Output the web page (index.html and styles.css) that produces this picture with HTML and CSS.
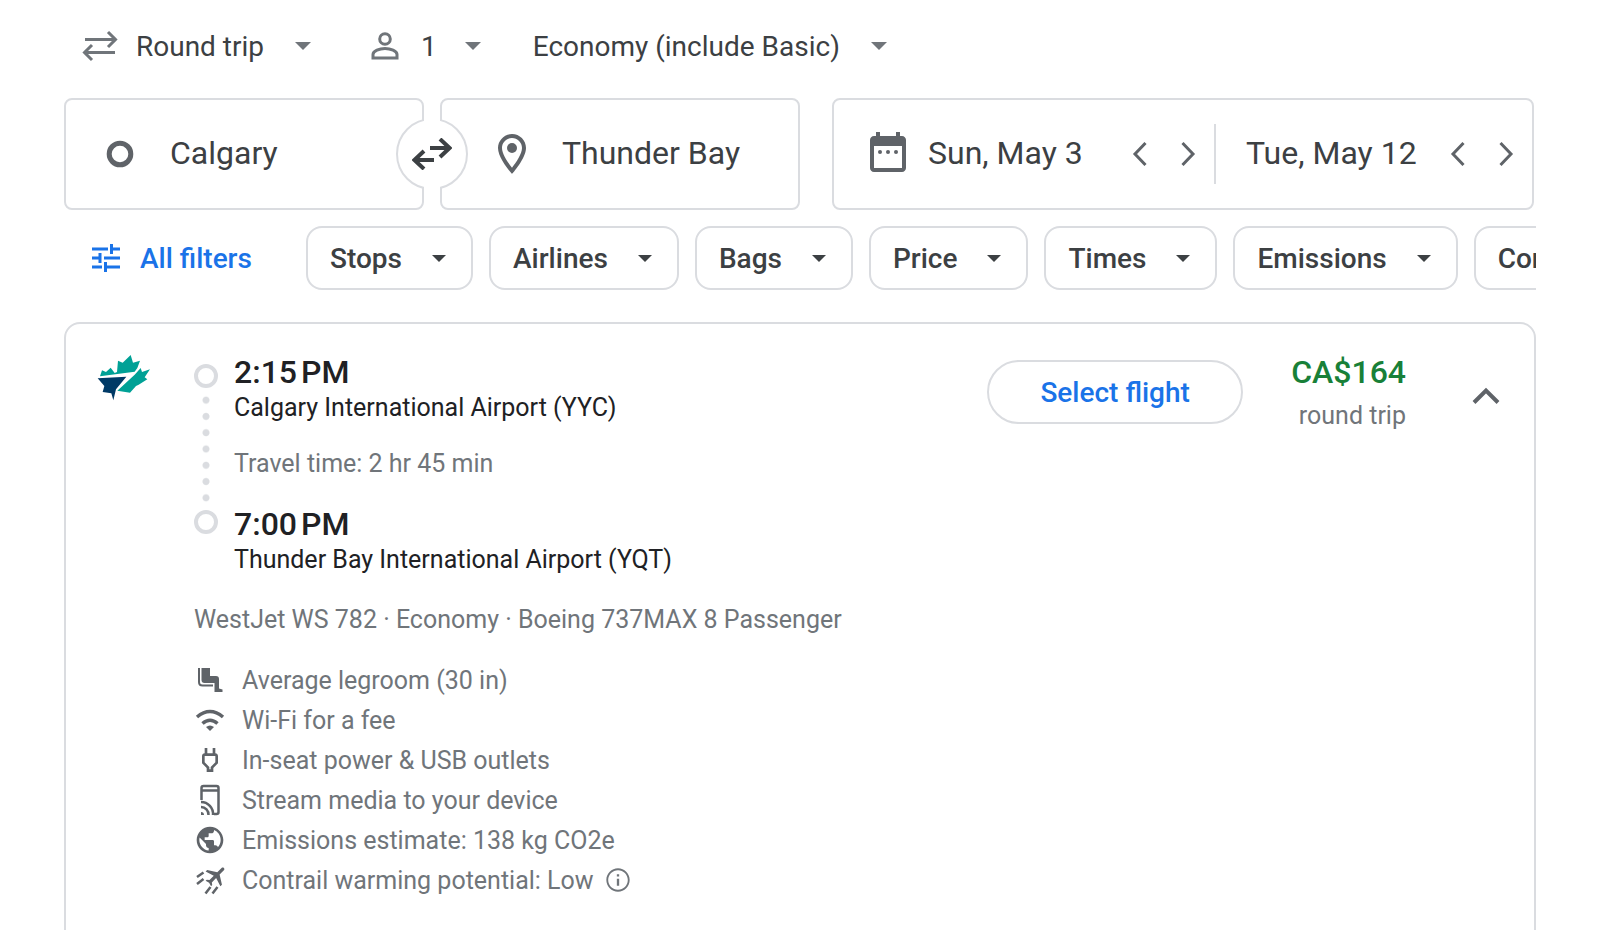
FILE: index.html
```
<!DOCTYPE html>
<html lang="en">
<head>
<meta charset="utf-8">
<title>Flights</title>
<link rel="stylesheet" href="styles.css">
</head>
<body>
<main class="page">
  <div class="options">
    <div class="option">
      <svg class="icon-trip" viewBox="0 0 36 36" fill="none" stroke="currentColor" stroke-width="3"><path d="M3 11.500H34M26 4l7.500 7.500L26 19M33 24.500H2M10 17l-7.500 7.500L10 32"/></svg>
      <div class="picker">
        <select class="picker-select" aria-label="Trip type"><option>Round trip</option><option>One way</option></select>
        <svg class="caret" viewBox="0 0 16 8"><path d="M0 0h16L8 8z" fill="currentColor"/></svg>
      </div>
    </div>
    <button class="option option-people" aria-label="1 passenger">
      <svg class="icon-person" viewBox="0 0 28 28" fill="none" stroke="currentColor" stroke-width="3"><circle cx="14" cy="7" r="5.300"/><path d="M2 26v-3.500C2 19 8.500 16.500 14 16.500S26 19 26 22.500V26z"/></svg>
      <span>1</span>
      <svg class="caret" viewBox="0 0 16 8"><path d="M0 0h16L8 8z" fill="currentColor"/></svg>
    </button>
    <div class="option">
      <div class="picker">
        <select class="picker-select" aria-label="Cabin class"><option>Economy (include Basic)</option><option>Business</option></select>
        <svg class="caret" viewBox="0 0 16 8"><path d="M0 0h16L8 8z" fill="currentColor"/></svg>
      </div>
    </div>
  </div>

  <div class="search">
    <div class="route">
      <label class="field">
        <span class="field-icon"><svg class="icon-origin" viewBox="0 0 28 28"><circle cx="14" cy="14" r="10.800" fill="none" stroke="currentColor" stroke-width="5"/></svg></span>
        <input class="field-input" type="text" value="Calgary" aria-label="Where from">
      </label>
      <label class="field">
        <span class="field-icon"><svg class="icon-large" viewBox="0 0 24 24" fill="currentColor"><path d="M12 2C8.130 2 5 5.130 5 9c0 5.250 7 13 7 13s7-7.750 7-13c0-3.870-3.130-7-7-7zM7 9c0-2.760 2.240-5 5-5s5 2.240 5 5c0 2.880-2.880 7.190-5 9.880C9.920 16.210 7 11.850 7 9z"/><circle cx="12" cy="9" r="2.500"/></svg></span>
        <input class="field-input" type="text" value="Thunder Bay" aria-label="Where to">
      </label>
      <button class="swap" aria-label="Swap origin and destination">
        <svg class="swap-icon" viewBox="0 0 40 32" fill="none" stroke="currentColor" stroke-width="4"><path d="M18 10H37M28 1l9.500 9L28 19M22 22H3M12 13l-9.500 9 9.500 9"/></svg>
      </button>
    </div>
    <div class="dates">
      <div class="date date-out">
        <svg class="icon-large" viewBox="0 0 24 24" fill="currentColor"><path d="M19 3h-1V1h-2v2H8V1H6v2H5c-1.110 0-2 .900-2 2v14c0 1.100.890 2 2 2h14c1.100 0 2-.900 2-2V5c0-1.100-.900-2-2-2zm0 16H5V8h14v11z"/><circle cx="8" cy="11" r="1"/><circle cx="12" cy="11" r="1"/><circle cx="16" cy="11" r="1"/></svg>
        <input class="date-input" type="text" value="Sun, May 3" aria-label="Departure">
        <button class="step" aria-label="Earlier departure"><svg viewBox="0 0 16 26"><path d="M13.500 2L3 13l10.500 11"/></svg></button>
        <button class="step" aria-label="Later departure"><svg viewBox="0 0 16 26"><path d="M2.500 2L13 13 2.500 24"/></svg></button>
      </div>
      <div class="date date-back">
        <input class="date-input" type="text" value="Tue, May 12" aria-label="Return">
        <button class="step" aria-label="Earlier return"><svg viewBox="0 0 16 26"><path d="M13.500 2L3 13l10.500 11"/></svg></button>
        <button class="step" aria-label="Later return"><svg viewBox="0 0 16 26"><path d="M2.500 2L13 13 2.500 24"/></svg></button>
      </div>
    </div>
  </div>

  <div class="filters">
    <button class="all-filters">
      <svg class="icon-tune" viewBox="0 0 28 28" fill="none" stroke="currentColor" stroke-width="3"><path d="M0 5h16M20 5h8M19.500 0v10M0 14h9M8 9v10M12 14h16M0 23h10M14 23h14M13.500 18v10"/></svg>
      <span>All filters</span>
    </button>
    <button class="chip">Stops<svg class="chip-caret" viewBox="0 0 14 7"><path d="M0 0h14L7 7z"/></svg></button>
    <button class="chip">Airlines<svg class="chip-caret" viewBox="0 0 14 7"><path d="M0 0h14L7 7z"/></svg></button>
    <button class="chip">Bags<svg class="chip-caret" viewBox="0 0 14 7"><path d="M0 0h14L7 7z"/></svg></button>
    <button class="chip">Price<svg class="chip-caret" viewBox="0 0 14 7"><path d="M0 0h14L7 7z"/></svg></button>
    <button class="chip">Times<svg class="chip-caret" viewBox="0 0 14 7"><path d="M0 0h14L7 7z"/></svg></button>
    <button class="chip">Emissions<svg class="chip-caret" viewBox="0 0 14 7"><path d="M0 0h14L7 7z"/></svg></button>
    <button class="chip">Connecting airports<svg class="chip-caret" viewBox="0 0 14 7"><path d="M0 0h14L7 7z"/></svg></button>
  </div>

  <article class="card">
    <svg class="logo" viewBox="6 6 168 156" role="img" aria-label="WestJet"><path fill="#00a196" d="M18 79l6-18 12 5 14-13 12 16 7-3 3-34 14 6 24-23 7 23 21-6-8 22-8 11z"/><path fill="#00a196" d="M122 74l18-20 4 12 24-8-16 24 8 6-26 16-8 4-18 20-38-6z"/><path fill="#003a66" d="M11 85l86-5-31 38-8 33-6-21-26-4 5-18z"/></svg>
    <div class="details">
      <div class="legs">
        <div class="timeline"><i class="stop"></i><i class="dots"></i><i class="stop"></i></div>
        <div class="stops">
          <div class="time">2:15&#8239;PM</div>
          <div class="airport">Calgary International Airport (YYC)</div>
          <div class="duration">Travel time: 2 hr 45 min</div>
          <div class="time">7:00&#8239;PM</div>
          <div class="airport">Thunder Bay International Airport (YQT)</div>
        </div>
      </div>
      <p class="flight">WestJet WS 782 · Economy · Boeing 737MAX 8 Passenger</p>
      <ul class="amenities">
        <li class="amenity"><svg class="amenity-icon" viewBox="0 0 32 32"><path d="M7.500 4h8.500v8h6q3 0 3 3v9.500l3.500 1V28h-8v-9H10.500q-3 0-3-3z" fill="currentColor"/><path d="M5 4v14q0 3.500 3.500 3.500H19" fill="none" stroke="currentColor" stroke-width="2"/></svg>Average legroom (30 in)</li>
        <li class="amenity"><svg class="amenity-icon" viewBox="0 0 32 32" fill="none" stroke="currentColor" stroke-width="3.500"><path d="M3 13q13-11 26 0M8.500 19.500q7.500-6.500 15 0"/><path d="M16 27l-4-4q4-3 8 0z" fill="currentColor" stroke="none"/></svg>Wi-Fi for a fee</li>
        <li class="amenity"><svg class="amenity-icon" viewBox="0 0 24 24" fill="currentColor"><path d="M16 9v4.660l-3.500 3.510V19h-1v-1.830L8 13.650V9h8m0-6h-2v4h-4V3H8v4c-1.100 0-2 .900-2 2v5.500L9.500 18v3h5v-3l3.500-3.510V9c0-1.100-.900-2-2-2V3z"/></svg>In-seat power &amp; USB outlets</li>
        <li class="amenity"><svg class="amenity-icon" viewBox="0 0 32 32" fill="none" stroke="currentColor" stroke-width="2.500"><path d="M7.500 16V4q0-2 2-2h13q2 0 2 2v24q0 2-2 2H20M8 6.500h16M7 18a12 12 0 0 1 12 13M7 23a7.500 7.500 0 0 1 7.500 8"/><path d="M7 28a3 3 0 0 1 3 3H7z" fill="currentColor" stroke="none"/></svg>Stream media to your device</li>
        <li class="amenity"><svg class="amenity-icon" viewBox="0 0 24 24" fill="currentColor"><path d="M12 2C6.480 2 2 6.480 2 12s4.480 10 10 10 10-4.480 10-10S17.520 2 12 2zm-1 17.930c-3.950-.490-7-3.850-7-7.930 0-.620.080-1.210.210-1.790L9 15v1c0 1.100.900 2 2 2v1.930zm6.900-2.540c-.260-.810-1-1.390-1.900-1.390h-1v-3c0-.550-.450-1-1-1H8v-2h2c.550 0 1-.450 1-1V7h2c1.100 0 2-.900 2-2v-.410c2.930 1.190 5 4.060 5 7.410 0 2.080-.800 3.970-2.100 5.390z"/></svg>Emissions estimate: 138 kg CO2e</li>
        <li class="amenity"><svg class="amenity-icon" viewBox="0 0 32 32" fill="currentColor"><path transform="translate(22.500 -6.500) rotate(45) scale(1.100)" d="M21 16v-2l-8-5V3.500c0-.830-.670-1.500-1.500-1.500S10 2.670 10 3.500V9l-8 5v2l8-2.500V19l-2 1.500V22l3.500-1 3.500 1v-1.500L13 19v-5.500l8 2.500z"/><path d="M3 13l6.500-4.500M3 20l6.500-5M11.500 29.500l5-6.500M18.500 29.500l5-6.500" fill="none" stroke="currentColor" stroke-width="2.500"/></svg>Contrail warming potential: Low
          <button class="info" aria-label="About contrails"><svg viewBox="0 0 24 24" fill="currentColor"><path d="M11 7h2v2h-2zm0 4h2v6h-2zm1-9C6.480 2 2 6.480 2 12s4.480 10 10 10 10-4.480 10-10S17.520 2 12 2zm0 18.400c-4.630 0-8.400-3.770-8.400-8.400S7.370 3.600 12 3.600s8.400 3.770 8.400 8.400-3.770 8.400-8.400 8.400z"/></svg></button></li>
      </ul>
    </div>
    <button class="select-flight">Select flight</button>
    <div class="fare">
      <div class="price">CA$164</div>
      <div class="fare-note">round trip</div>
    </div>
    <button class="collapse" aria-label="Hide flight details"><svg viewBox="0 0 28 18"><path d="M2 15.500L14 3.500l12 12"/></svg></button>
  </article>
</main>
</body>
</html>
```
FILE: styles.css
```
* { box-sizing: border-box; }

body {
  margin: 0;
  overflow: hidden;
  background: #fff;
  color: #3c4043;
  font-family: Roboto, sans-serif;
  font-size: 25px;
}

button, input, select {
  margin: 0;
  padding: 0;
  border: 0;
  background: none;
  color: inherit;
  font: inherit;
}

button { cursor: pointer; }
svg { display: block; flex: none; }

.page { padding: 0 64px; }

.options {
  display: flex;
  align-items: center;
  gap: 52px;
  height: 98px;
  padding: 0 18px 6px;
  font-size: 28px;
}

.option { display: flex; align-items: center; gap: 18px; }
.option-people { gap: 22px; margin-left: 8px; }
.option-people .caret { margin-left: 6px; }
.icon-trip { width: 36px; height: 36px; color: #70757a; }
.icon-person { width: 28px; height: 28px; color: #70757a; }
.caret { width: 16px; height: 8px; color: #70757a; }

.picker { display: grid; align-items: center; }
.picker-select {
  grid-area: 1 / 1;
  padding-right: 46px;
  appearance: none;
}
.picker .caret { grid-area: 1 / 1; justify-self: end; pointer-events: none; }

.search {
  display: grid;
  grid-template-columns: 736fr 702fr;
  gap: 32px;
  padding-right: 2px;
  font-size: 32px;
}

.route {
  position: relative;
  display: grid;
  grid-template-columns: 1fr 1fr;
  gap: 16px;
}

.field, .dates {
  height: 112px;
  border: 2px solid #dadce0;
  border-radius: 8px;
}

.field { display: flex; align-items: center; min-width: 0; }
.field-icon {
  display: flex;
  flex: none;
  justify-content: center;
  width: 104px;
  padding-left: 4px;
  color: #5f6368;
}
.field + .field .field-icon { width: 120px; padding-left: 20px; }
.icon-origin { width: 28px; height: 28px; }
.icon-large { width: 48px; height: 48px; color: #5f6368; }
.field-input, .date-input { flex: 1; min-width: 0; height: 48px; padding-bottom: 2px; }

.swap {
  position: absolute;
  top: 50%;
  left: 50%;
  display: grid;
  place-items: center;
  width: 72px;
  height: 72px;
  margin: -36px;
  border: 2px solid #dadce0;
  border-radius: 50%;
  background: #fff;
}
.swap::before {
  content: "";
  position: absolute;
  top: -4px;
  bottom: -4px;
  left: 26px;
  width: 16px;
  background: #fff;
}
.swap-icon { position: relative; width: 40px; height: 32px; }

.dates { display: grid; grid-template-columns: 382fr 316fr; align-items: center; }
.date { display: flex; align-items: center; min-width: 0; height: 60px; padding: 0 10px 0 30px; }
.date-out { border-right: 2px solid #dadce0; }
.date-out .date-input { margin-left: 16px; }
.step { display: grid; flex: none; place-items: center; width: 32px; height: 48px; }
.step + .step { margin-left: 16px; }
.step svg { width: 16px; height: 26px; fill: none; stroke: #5f6368; stroke-width: 3; }

.filters {
  display: flex;
  gap: 16px;
  margin: 16px 0 32px;
  overflow: hidden;
  font-size: 28px;
  font-weight: 500;
}

.all-filters {
  display: flex;
  flex: none;
  align-items: center;
  gap: 20px;
  width: 226px;
  padding-left: 28px;
  color: #1a73e8;
}
.icon-tune { width: 28px; height: 28px; }

.chip {
  display: flex;
  flex: none;
  align-items: center;
  gap: 30px;
  height: 64px;
  padding: 0 25px 0 22px;
  border: 2px solid #dadce0;
  border-radius: 16px;
  white-space: nowrap;
}
.chip-caret { width: 14px; height: 7px; fill: currentColor; }

.card {
  display: flex;
  align-items: flex-start;
  min-height: 640px;
  padding: 28px 32px 28px 30px;
  border: 2px solid #dadce0;
  border-radius: 16px;
  color: #70757a;
}

.logo { width: 56px; height: 52px; margin-right: 42px; }
.details { flex: 1; min-width: 0; }
.legs { display: flex; gap: 16px; }

.timeline {
  display: flex;
  flex-direction: column;
  align-items: center;
  width: 24px;
  height: 182px;
  padding-top: 12px;
}
.stop { width: 24px; height: 24px; border: 4px solid #dadce0; border-radius: 50%; }
.dots {
  flex: 1;
  width: 8px;
  margin: 4px 0;
  background: radial-gradient(circle, #dadce0 3px, transparent 4px) 0 0 / 8px 16px round;
}

.time { color: #202124; font-size: 32px; font-weight: 500; line-height: 40px; }
.airport { color: #202124; line-height: 32px; }
.duration { margin: 24px 0; line-height: 32px; }
.flight { margin: 28px 0 24px; line-height: 32px; }
.amenities { margin: 0; padding: 0; list-style: none; }
.amenity { display: flex; align-items: center; height: 40px; }
.amenity-icon { width: 32px; height: 32px; margin-right: 16px; color: #5f6368; }
.info { margin-left: 10px; }
.info svg { width: 28px; height: 28px; }

.select-flight {
  width: 256px;
  height: 64px;
  margin: 8px 48px 0 0;
  border: 2px solid #dadce0;
  border-radius: 32px;
  color: #1a73e8;
  font-size: 28px;
  font-weight: 500;
}

.fare { text-align: right; }
.price { color: #188038; font-size: 32px; font-weight: 500; line-height: 40px; }
.fare-note { margin-top: 8px; line-height: 32px; }
.collapse { display: grid; place-items: center; width: 32px; height: 48px; margin: 20px 0 0 64px; }
.collapse svg { width: 28px; height: 18px; fill: none; stroke: #5f6368; stroke-width: 4; }
```
